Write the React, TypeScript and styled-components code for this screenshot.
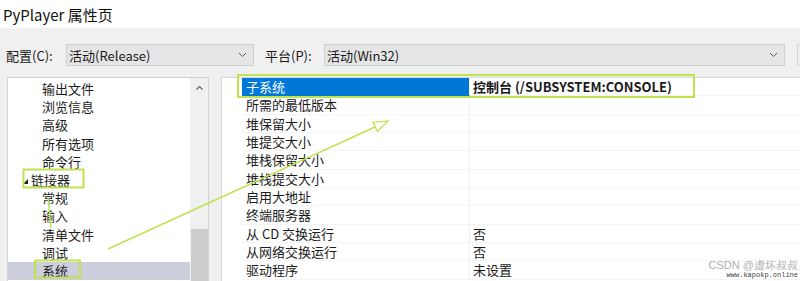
import React from 'react';
import styled, { createGlobalStyle } from 'styled-components';

const Global = createGlobalStyle`
    html, body {
        margin: 0;
        padding: 0;
        background: #f0f0f0;
    }
    body {
        font-family: "Noto Sans CJK SC", "Noto Sans", sans-serif;
        color: #1b1b1b;
    }
`

const Page = styled.div`
    position: relative;
    width: 800px;
    height: 281px;
    overflow: hidden;
    background: #f0f0f0;
`

const TitleBar = styled.div`
    height: 28px;
    background: #fff;
    display: flex;
    align-items: center;
    padding-left: 3px;
    font-size: 15px;
    color: #111;
`

const ConfigRow = styled.div`
    display: flex;
    align-items: center;
    height: 22px;
    margin-top: 16px;
    padding-left: 6px;
    font-size: 13px;
`

const Label = styled.span<{ $w: number }>`
    width: ${p => p.$w}px;
    flex: none;
`

const Select = styled.div<{ $w: number }>`
    width: ${p => p.$w}px;
    height: 22px;
    box-sizing: border-box;
    flex: none;
    background: #e5e5e5;
    border: 1px solid #d0d0d0;
    display: flex;
    align-items: center;
    justify-content: space-between;
    padding: 0 6px 0 2px;
    font-size: 13px;
`

const StubButton = styled.div`
    margin-left: 12px;
    width: 20px;
    height: 22px;
    box-sizing: border-box;
    border: 1px solid #d5d5d5;
    border-right: none;
    background: #efefef;
    flex: none;
`

const Panels = styled.div`
    display: flex;
    gap: 12px;
    margin-top: 11px;
    padding-left: 7px;
`

const TreePanel = styled.div`
    width: 202px;
    height: 210px;
    box-sizing: border-box;
    flex: none;
    background: #fff;
    border: 1px solid #d2d2d2;
    border-bottom: none;
    display: flex;
`

const TreeList = styled.div`
    flex: 1;
    padding-top: 2px;
`

const TreeRow = styled.div<{ $indent: number; $selected?: boolean }>`
    height: 18.2px;
    line-height: 18.2px;
    font-size: 13px;
    padding-left: ${p => p.$indent}px;
    background: ${p => (p.$selected ? '#cccedb' : 'transparent')};
    display: flex;
    align-items: center;
    white-space: nowrap;
`

const Expander = styled.span`
    width: 0;
    height: 0;
    border-left: 5px solid transparent;
    border-bottom: 5px solid #222;
    margin-right: 3px;
    margin-top: 3px;
`

const ScrollBar = styled.div`
    width: 18px;
    flex: none;
    background: #f0f0f0;
    display: flex;
    flex-direction: column;
    align-items: center;
`

const ScrollArrow = styled.div`
    height: 20px;
    display: flex;
    align-items: center;
    justify-content: center;
`

const ScrollSpace = styled.div<{ $h: number }>`
    height: ${p => p.$h}px;
`

const Thumb = styled.div`
    width: 17px;
    flex: 1;
    background: #cdcdcd;
`

const PropPanel = styled.div`
    flex: 1;
    height: 210px;
    background: #fff;
    border: 1px solid #d9d9d9;
    border-right: none;
    border-bottom: none;
    margin-right: -20px;
`

const PropRow = styled.div`
    display: flex;
    height: 18.35px;
    font-size: 13px;
    line-height: 18px;
`

const Gutter = styled.div`
    width: 20px;
    flex: none;
`

const NameCell = styled.div<{ $selected?: boolean }>`
    width: 228px;
    flex: none;
    box-sizing: border-box;
    padding-left: 4px;
    background: ${p => (p.$selected ? '#0078d7' : '#fff')};
    color: ${p => (p.$selected ? '#fff' : '#1b1b1b')};
    border-bottom: 1px solid ${p => (p.$selected ? '#0078d7' : '#f4f4f4')};
    border-right: 1px solid #f2f2f2;
    white-space: nowrap;
`

const ValueCell = styled.div<{ $bold?: boolean }>`
    flex: 1;
    box-sizing: border-box;
    padding-left: 3px;
    font-weight: ${p => (p.$bold ? 700 : 400)};
    border-bottom: 1px solid #f4f4f4;
    white-space: nowrap;
`

const Overlay = styled.svg`
    position: absolute;
    left: 0;
    top: 0;
    pointer-events: none;
`

const Watermark = styled.div`
    position: absolute;
    right: 2px;
    bottom: 2px;
    font-family: "Liberation Sans", sans-serif;
    font-size: 11px;
    color: #b0b0b0;
    text-align: right;
    line-height: 11px;
`

const WatermarkSub = styled.div`
    font-family: "Liberation Mono", monospace;
    font-size: 7px;
    line-height: 8px;
    color: #444;
`

const Chevron = () => (
    <svg width="9" height="6" viewBox="0 0 9 6">
        <path d="M1 1 L4.5 4.5 L8 1" fill="none" stroke="#606060" strokeWidth="1" />
    </svg>
)

const UpArrow = () => (
    <svg width="9" height="6" viewBox="0 0 9 6">
        <path d="M1.5 4.5 L4.5 1.5 L7.5 4.5" fill="none" stroke="#606060" strokeWidth="1.2" />
    </svg>
)

const tree = [
    { text: '输出文件', indent: 34 },
    { text: '浏览信息', indent: 34 },
    { text: '高级', indent: 34 },
    { text: '所有选项', indent: 34 },
    { text: '命令行', indent: 34 },
    { text: '链接器', indent: 15, expanded: true },
    { text: '常规', indent: 34 },
    { text: '输入', indent: 34 },
    { text: '清单文件', indent: 34 },
    { text: '调试', indent: 34 },
    { text: '系统', indent: 34, selected: true },
]

const props = [
    { name: '子系统', value: '控制台 (/SUBSYSTEM:CONSOLE)', selected: true },
    { name: '所需的最低版本', value: '' },
    { name: '堆保留大小', value: '' },
    { name: '堆提交大小', value: '' },
    { name: '堆栈保留大小', value: '' },
    { name: '堆栈提交大小', value: '' },
    { name: '启用大地址', value: '' },
    { name: '终端服务器', value: '' },
    { name: '从 CD 交换运行', value: '否' },
    { name: '从网络交换运行', value: '否' },
    { name: '驱动程序', value: '未设置' },
]

const green = '#bde34f'

const App = () => {
    return (
        <Page>
            <Global />
            <TitleBar>PyPlayer 属性页</TitleBar>
            <ConfigRow>
                <Label $w={60}>配置(C):</Label>
                <Select $w={188}>
                    <span>活动(Release)</span>
                    <Chevron />
                </Select>
                <Label $w={59} style={{ marginLeft: 11 }}>平台(P):</Label>
                <Select $w={461}>
                    <span>活动(Win32)</span>
                    <Chevron />
                </Select>
                <StubButton />
            </ConfigRow>
            <Panels>
                <TreePanel>
                    <TreeList>
                        {tree.map(t => (
                            <TreeRow key={t.text} $indent={t.indent} $selected={t.selected}>
                                {t.expanded && <Expander />}
                                {t.text}
                            </TreeRow>
                        ))}
                    </TreeList>
                    <ScrollBar>
                        <ScrollArrow><UpArrow /></ScrollArrow>
                        <ScrollSpace $h={131} />
                        <Thumb />
                    </ScrollBar>
                </TreePanel>
                <PropPanel>
                    {props.map(p => (
                        <PropRow key={p.name}>
                            <Gutter />
                            <NameCell $selected={p.selected}>{p.name}</NameCell>
                            <ValueCell $bold={p.selected}>{p.value}</ValueCell>
                        </PropRow>
                    ))}
                </PropPanel>
            </Panels>
            <Overlay width="800" height="281" viewBox="0 0 800 281">
                <rect x="238" y="75" width="456" height="22" fill="none" stroke={green} strokeWidth="2" />
                <rect x="23.5" y="169.5" width="60" height="18" fill="none" stroke={green} strokeWidth="2" />
                <rect x="35" y="260.5" width="45" height="17" fill="none" stroke={green} strokeWidth="2" />
                <line x1="48" y1="197" x2="51" y2="228" stroke={green} strokeWidth="1.5" />
                <line x1="108" y1="249" x2="375" y2="127" stroke={green} strokeWidth="1.5" />
                <polygon points="388,121 377.3,131.4 373.1,122.2" fill="#fff" stroke={green} strokeWidth="1.3" />
            </Overlay>
            <Watermark>
                CSDN @虚坏叔叔
                <WatermarkSub>www.kapokp.online</WatermarkSub>
            </Watermark>
        </Page>
    )
}

export default App;
